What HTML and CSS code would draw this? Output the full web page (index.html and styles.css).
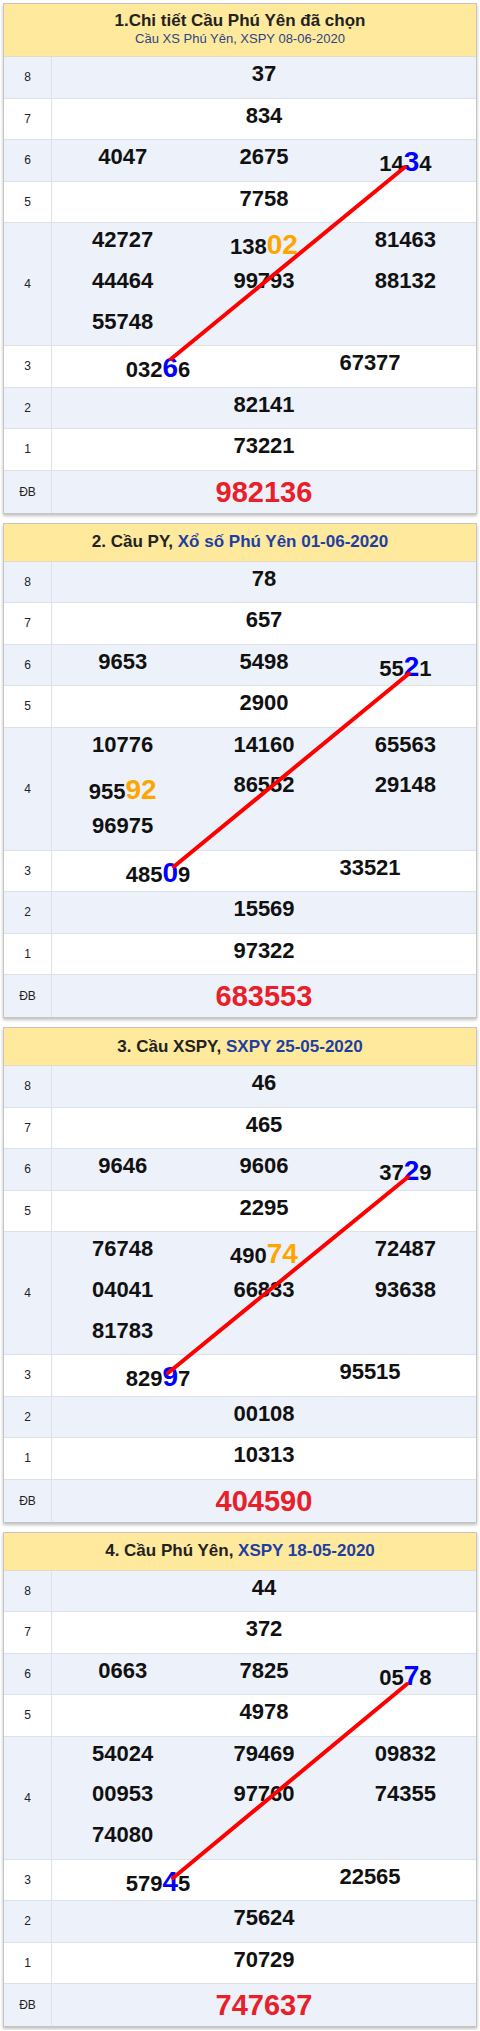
FILE: index.html
```html
<!DOCTYPE html>
<html lang="vi">
<head>
<meta charset="utf-8">
<title>Cầu Phú Yên</title>
<link rel="stylesheet" href="styles.css">
</head>
<body>
<div class="page">

<section class="card">
  <div class="head head-2">
    <div class="title">1.Chi tiết Cầu Phú Yên đã chọn</div>
    <div class="sub">Cầu XS Phú Yên, XSPY 08-06-2020</div>
  </div>
  <div class="rows">
    <div class="row"><div class="lbl">8</div><div class="vals c1"><span class="n">37</span></div></div>
    <div class="row"><div class="lbl">7</div><div class="vals c1"><span class="n">834</span></div></div>
    <div class="row"><div class="lbl">6</div><div class="vals c3"><span class="n">4047</span><span class="n">2675</span><span class="n up">14<span class="hl b">3</span>4</span></div></div>
    <div class="row"><div class="lbl">5</div><div class="vals c1"><span class="n">7758</span></div></div>
    <div class="row tall"><div class="lbl">4</div><div class="vals c3"><span class="n">42727</span><span class="n up">138<span class="hl o">02</span></span><span class="n">81463</span><span class="n">44464</span><span class="n">99793</span><span class="n">88132</span><span class="n">55748</span></div></div>
    <div class="row"><div class="lbl">3</div><div class="vals c2"><span class="n up">032<span class="hl b">6</span>6</span><span class="n">67377</span></div></div>
    <div class="row"><div class="lbl">2</div><div class="vals c1"><span class="n">82141</span></div></div>
    <div class="row"><div class="lbl">1</div><div class="vals c1"><span class="n">73221</span></div></div>
    <div class="row db"><div class="lbl">ĐB</div><div class="vals c1"><span class="n big">982136</span></div></div>
    <svg class="bridge"><line x1="401" y1="110" x2="167" y2="302"/></svg>
  </div>
</section>

<section class="card">
  <div class="head">
    <div class="title">2. Cầu PY, <span class="blue-t">Xổ số Phú Yên 01-06-2020</span></div>
  </div>
  <div class="rows">
    <div class="row"><div class="lbl">8</div><div class="vals c1"><span class="n">78</span></div></div>
    <div class="row"><div class="lbl">7</div><div class="vals c1"><span class="n">657</span></div></div>
    <div class="row"><div class="lbl">6</div><div class="vals c3"><span class="n">9653</span><span class="n">5498</span><span class="n up">55<span class="hl b">2</span>1</span></div></div>
    <div class="row"><div class="lbl">5</div><div class="vals c1"><span class="n">2900</span></div></div>
    <div class="row tall"><div class="lbl">4</div><div class="vals c3"><span class="n">10776</span><span class="n">14160</span><span class="n">65563</span><span class="n up">955<span class="hl o">92</span></span><span class="n">86552</span><span class="n">29148</span><span class="n">96975</span></div></div>
    <div class="row"><div class="lbl">3</div><div class="vals c2"><span class="n up">485<span class="hl b">0</span>9</span><span class="n">33521</span></div></div>
    <div class="row"><div class="lbl">2</div><div class="vals c1"><span class="n">15569</span></div></div>
    <div class="row"><div class="lbl">1</div><div class="vals c1"><span class="n">97322</span></div></div>
    <div class="row db"><div class="lbl">ĐB</div><div class="vals c1"><span class="n big">683553</span></div></div>
    <svg class="bridge"><line x1="405" y1="111.5" x2="170" y2="304.5"/></svg>
  </div>
</section>

<section class="card">
  <div class="head">
    <div class="title">3. Cầu XSPY, <span class="blue-t">SXPY 25-05-2020</span></div>
  </div>
  <div class="rows">
    <div class="row"><div class="lbl">8</div><div class="vals c1"><span class="n">46</span></div></div>
    <div class="row"><div class="lbl">7</div><div class="vals c1"><span class="n">465</span></div></div>
    <div class="row"><div class="lbl">6</div><div class="vals c3"><span class="n">9646</span><span class="n">9606</span><span class="n up">37<span class="hl b">2</span>9</span></div></div>
    <div class="row"><div class="lbl">5</div><div class="vals c1"><span class="n">2295</span></div></div>
    <div class="row tall"><div class="lbl">4</div><div class="vals c3"><span class="n">76748</span><span class="n up">490<span class="hl o">74</span></span><span class="n">72487</span><span class="n">04041</span><span class="n">66833</span><span class="n">93638</span><span class="n">81783</span></div></div>
    <div class="row"><div class="lbl">3</div><div class="vals c2"><span class="n up">829<span class="hl b">9</span>7</span><span class="n">95515</span></div></div>
    <div class="row"><div class="lbl">2</div><div class="vals c1"><span class="n">00108</span></div></div>
    <div class="row"><div class="lbl">1</div><div class="vals c1"><span class="n">10313</span></div></div>
    <div class="row db"><div class="lbl">ĐB</div><div class="vals c1"><span class="n big">404590</span></div></div>
    <svg class="bridge"><line x1="404" y1="111" x2="164" y2="307"/></svg>
  </div>
</section>

<section class="card">
  <div class="head">
    <div class="title">4. Cầu Phú Yên, <span class="blue-t">XSPY 18-05-2020</span></div>
  </div>
  <div class="rows">
    <div class="row"><div class="lbl">8</div><div class="vals c1"><span class="n">44</span></div></div>
    <div class="row"><div class="lbl">7</div><div class="vals c1"><span class="n">372</span></div></div>
    <div class="row"><div class="lbl">6</div><div class="vals c3"><span class="n">0663</span><span class="n">7825</span><span class="n up">05<span class="hl b">7</span>8</span></div></div>
    <div class="row"><div class="lbl">5</div><div class="vals c1"><span class="n">4978</span></div></div>
    <div class="row tall"><div class="lbl">4</div><div class="vals c3"><span class="n">54024</span><span class="n">79469</span><span class="n">09832</span><span class="n">00953</span><span class="n">97760</span><span class="n">74355</span><span class="n">74080</span></div></div>
    <div class="row"><div class="lbl">3</div><div class="vals c2"><span class="n up">579<span class="hl b">4</span>5</span><span class="n">22565</span></div></div>
    <div class="row"><div class="lbl">2</div><div class="vals c1"><span class="n">75624</span></div></div>
    <div class="row"><div class="lbl">1</div><div class="vals c1"><span class="n">70729</span></div></div>
    <div class="row db"><div class="lbl">ĐB</div><div class="vals c1"><span class="n big">747637</span></div></div>
    <svg class="bridge"><line x1="403" y1="113" x2="169" y2="307"/></svg>
  </div>
</section>

</div>
</body>
</html>
```

FILE: styles.css
```css
* { box-sizing: border-box; margin: 0; padding: 0; }

body {
  margin: 0;
  background: #ffffff;
  font-family: "Liberation Sans", Arial, sans-serif;
  color: #111111;
}

.page {
  padding: 3px;
  display: flex;
  flex-direction: column;
  gap: 9px;
}

.card {
  border: 1px solid #c4c4c4;
  background: #ffffff;
  box-shadow: 0 2px 3px rgba(0, 0, 0, 0.25);
}

.head {
  height: 38px;
  background: #ffe99c;
  border-bottom: 1px solid #e3dcc0;
  display: flex;
  flex-direction: column;
  justify-content: center;
  text-align: center;
}

.head-2 { height: 53px; padding-bottom: 2px; }

.title {
  font-size: 17px;
  line-height: 20px;
  font-weight: 700;
  color: #222222;
}

.sub {
  font-size: 13px;
  line-height: 16px;
  color: #2c4585;
}

.blue-t { color: #1d3fa3; }

.rows { position: relative; }

.row {
  display: grid;
  grid-template-columns: 48px 1fr;
  height: 41.5px;
  background: #edf1fa;
  border-bottom: 1px solid #dde2ea;
}

.row:nth-child(even) { background: #ffffff; }
.row.tall { height: 123px; }
.row.db { height: 42px; border-bottom: 0; }

.lbl {
  display: flex;
  align-items: center;
  justify-content: center;
  border-right: 1px solid #dde2ea;
  font-size: 12px;
  color: #222222;
}

.vals {
  display: grid;
  grid-auto-rows: 1fr;
  align-items: center;
  justify-items: center;
}

.c1 { grid-template-columns: 1fr; }
.c2 { grid-template-columns: repeat(2, 1fr); }
.c3 { grid-template-columns: repeat(3, 1fr); }

.n {
  font-size: 22px;
  line-height: 26px;
  font-weight: 700;
  color: #111111;
  padding-bottom: 6px;
  white-space: nowrap;
}

.n.up { padding-bottom: 0; padding-top: 8px; }

.n.big {
  font-size: 29px;
  line-height: 32px;
  padding: 0;
  color: #e8202a;
}

.hl { font-size: 28px; line-height: 0; }
.b { color: #0000ff; }
.o { color: #ffa500; }

.bridge {
  position: absolute;
  left: 0;
  top: 0;
  width: 100%;
  height: 100%;
  overflow: visible;
  pointer-events: none;
}

.bridge line {
  stroke: #ff0000;
  stroke-width: 4;
  stroke-linecap: round;
}
```
